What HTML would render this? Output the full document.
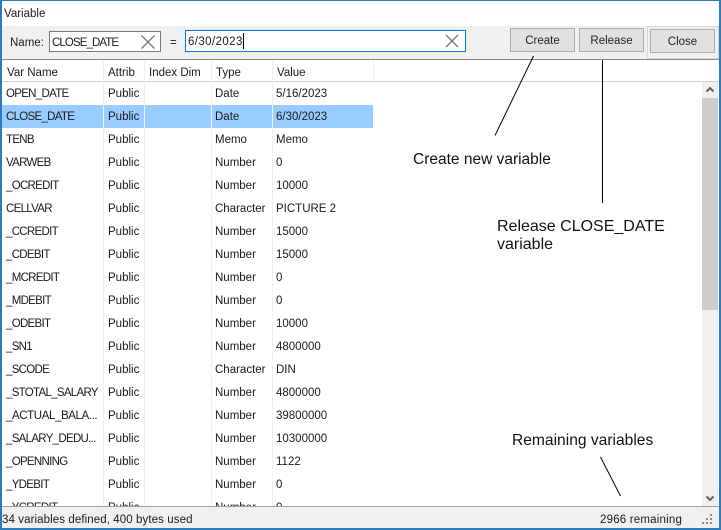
<!DOCTYPE html>
<html><head><meta charset="utf-8">
<style>
html,body{margin:0;padding:0;background:#fff}
#w{position:relative;width:721px;height:530px;overflow:hidden;background:#fff;font-family:"Liberation Sans",sans-serif;font-size:11.5px;color:#1a1a1a}
.a{position:absolute;white-space:nowrap}
.b{position:absolute;box-sizing:border-box;background:#e1e1e1;border:1px solid #adadad;text-align:center;font-size:11.5px;color:#222;line-height:25px}
.r{position:absolute;left:2px;width:371px;height:23px}
.r span{position:absolute;top:6px;white-space:nowrap}
.r .c1{left:4px;letter-spacing:-.7px}.r .c2{left:106px}.r .c4{left:213px}.r .c5{left:274px}
.sel{background:#99ccff}
.v{position:absolute;top:60px;height:446px;width:1px;background:#f0f0f0;z-index:1}
.ann{position:absolute;color:#111;line-height:18px;white-space:nowrap}
</style></head><body>
<div id="w">
<div class="a" style="left:4px;top:8px;font-size:11.5px">Variable</div>
<div class="a" style="left:2px;top:26px;width:717px;height:33px;background:#f0f0f0"></div>
<div class="a" style="left:2px;top:59px;width:717px;height:1px;background:#8a8a8a"></div>
<div class="a" style="left:10px;top:37px">Name:</div>
<div class="a" style="left:49px;top:31px;width:112px;height:21px;box-sizing:border-box;background:#fff;border:1px solid #7a7a7a"></div>
<div class="a" style="left:52px;top:37px;letter-spacing:-.9px">CLOSE_DATE</div>
<svg class="a" style="left:140px;top:34px" width="16" height="16"><path d="M1.500 1.500L14.500 14.500M14.500 1.500L1.500 14.500" stroke="#777" stroke-width="1.300" fill="none"/></svg>
<div class="a" style="left:170px;top:37px">=</div>
<div class="a" style="left:185px;top:30px;width:281px;height:22px;box-sizing:border-box;background:#fff;border:1px solid #0078d7"></div>
<div class="a" style="left:188px;top:36px;letter-spacing:.4px">6/30/2023</div>
<div class="a" style="left:243px;top:33px;width:1px;height:16px;background:#000"></div>
<svg class="a" style="left:445px;top:34px" width="14" height="14"><path d="M1 1L13 13M13 1L1 13" stroke="#777" stroke-width="1.300" fill="none"/></svg>
<div class="b" style="left:510px;top:28px;width:65px;height:24px">Create</div>
<div class="b" style="left:579px;top:28px;width:65px;height:24px">Release</div>
<div class="a" style="left:647px;top:26px;width:72px;height:33px;box-sizing:border-box;background:#f0f0f0;border:1px solid #d9d9d9"></div>
<div class="b" style="left:650px;top:29px;width:65px;height:24px;line-height:25px">Close</div>

<div class="a" style="left:2px;top:81px;width:716px;height:1px;background:#d0d0d0"></div>
<div class="v" style="left:103px"></div><div class="v" style="left:144px"></div><div class="v" style="left:211px"></div><div class="v" style="left:272px"></div><div class="v" style="left:373px;height:22px"></div>
<div class="a" style="left:7px;top:67px">Var Name</div>
<div class="a" style="left:108px;top:67px">Attrib</div>
<div class="a" style="left:149px;top:67px">Index Dim</div>
<div class="a" style="left:216px;top:67px">Type</div>
<div class="a" style="left:277px;top:67px">Value</div>

<div class="r" style="top:82px"><span class="c1">OPEN_DATE</span><span class="c2">Public</span><span class="c4">Date</span><span class="c5">5/16/2023</span></div>
<div class="r sel" style="top:105px"><span class="c1">CLOSE_DATE</span><span class="c2">Public</span><span class="c4">Date</span><span class="c5">6/30/2023</span></div>
<div class="r" style="top:128px"><span class="c1">TENB</span><span class="c2">Public</span><span class="c4">Memo</span><span class="c5">Memo</span></div>
<div class="r" style="top:151px"><span class="c1">VARWEB</span><span class="c2">Public</span><span class="c4">Number</span><span class="c5">0</span></div>
<div class="r" style="top:174px"><span class="c1">_OCREDIT</span><span class="c2">Public</span><span class="c4">Number</span><span class="c5">10000</span></div>
<div class="r" style="top:197px"><span class="c1">CELLVAR</span><span class="c2">Public</span><span class="c4">Character</span><span class="c5">PICTURE 2</span></div>
<div class="r" style="top:220px"><span class="c1">_CCREDIT</span><span class="c2">Public</span><span class="c4">Number</span><span class="c5">15000</span></div>
<div class="r" style="top:243px"><span class="c1">_CDEBIT</span><span class="c2">Public</span><span class="c4">Number</span><span class="c5">15000</span></div>
<div class="r" style="top:266px"><span class="c1">_MCREDIT</span><span class="c2">Public</span><span class="c4">Number</span><span class="c5">0</span></div>
<div class="r" style="top:289px"><span class="c1">_MDEBIT</span><span class="c2">Public</span><span class="c4">Number</span><span class="c5">0</span></div>
<div class="r" style="top:312px"><span class="c1">_ODEBIT</span><span class="c2">Public</span><span class="c4">Number</span><span class="c5">10000</span></div>
<div class="r" style="top:335px"><span class="c1">_SN1</span><span class="c2">Public</span><span class="c4">Number</span><span class="c5">4800000</span></div>
<div class="r" style="top:358px"><span class="c1">_SCODE</span><span class="c2">Public</span><span class="c4">Character</span><span class="c5">DIN</span></div>
<div class="r" style="top:381px"><span class="c1">_STOTAL_SALARY</span><span class="c2">Public</span><span class="c4">Number</span><span class="c5">4800000</span></div>
<div class="r" style="top:404px"><span class="c1" style="letter-spacing:-.4px">_ACTUAL_BALA...</span><span class="c2">Public</span><span class="c4">Number</span><span class="c5">39800000</span></div>
<div class="r" style="top:427px"><span class="c1">_SALARY_DEDU...</span><span class="c2">Public</span><span class="c4">Number</span><span class="c5">10300000</span></div>
<div class="r" style="top:450px"><span class="c1">_OPENNING</span><span class="c2">Public</span><span class="c4">Number</span><span class="c5">1122</span></div>
<div class="r" style="top:473px"><span class="c1">_YDEBIT</span><span class="c2">Public</span><span class="c4">Number</span><span class="c5">0</span></div>
<div class="r" style="top:496px;height:10px;overflow:hidden"><span class="c1">_YCREDIT</span><span class="c2">Public</span><span class="c4">Number</span><span class="c5">0</span></div>

<div class="a" style="left:702px;top:82px;width:16px;height:424px;background:#f0f0f0"></div>
<div class="a" style="left:702px;top:98px;width:16px;height:212px;background:#cdcdcd"></div>
<svg class="a" style="left:702px;top:82px" width="16" height="16"><path d="M4.500 9.500L8 6L11.500 9.500" stroke="#606060" stroke-width="2" fill="none"/></svg>
<svg class="a" style="left:702px;top:490px" width="16" height="16"><path d="M4.500 6.500L8 10L11.500 6.500" stroke="#606060" stroke-width="2" fill="none"/></svg>

<svg class="a" style="left:0;top:0" width="721" height="530">
<path d="M533.500 56L495 135.500" stroke="#000" stroke-width="1" fill="none"/>
<path d="M602.500 60V203" stroke="#000" stroke-width="1" fill="none"/>
<path d="M600.500 457L620.500 496" stroke="#000" stroke-width="1" fill="none"/>
</svg>
<div class="ann" style="left:413px;top:151px;font-size:15.500px">Create new variable</div>
<div class="ann" style="left:497px;top:218px;font-size:16px">Release CLOSE_DATE<br>variable</div>
<div class="ann" style="left:512px;top:432px;font-size:15.600px">Remaining variables</div>

<div class="a" style="left:2px;top:506px;width:717px;height:22px;background:#f0f0f0;border-top:1px solid #a0a0a0;box-sizing:border-box"></div>
<div class="a" style="left:2px;top:514px;letter-spacing:.09px">34 variables defined, 400 bytes used</div>
<div class="a" style="left:600px;top:514px;letter-spacing:.2px">2966 remaining</div>
<svg class="a" style="left:700px;top:512px" width="14" height="14"><g fill="#8a8a8a"><rect x="10" y="2" width="2" height="2"/><rect x="6" y="6" width="2" height="2"/><rect x="10" y="6" width="2" height="2"/><rect x="2" y="10" width="2" height="2"/><rect x="6" y="10" width="2" height="2"/><rect x="10" y="10" width="2" height="2"/></g></svg>

<div class="a" style="left:0;top:0;width:721px;height:1px;background:#2b7cbd"></div>
<div class="a" style="left:0;top:0;width:2px;height:530px;background:#2b7cbd"></div>
<div class="a" style="left:719px;top:0;width:2px;height:530px;background:#2b7cbd"></div>
<div class="a" style="left:0;top:528px;width:721px;height:2px;background:#2b7cbd"></div>
</div>
</body></html>
